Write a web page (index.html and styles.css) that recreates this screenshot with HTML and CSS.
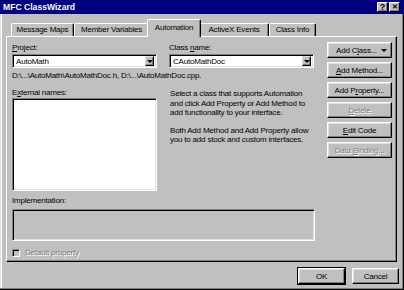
FILE: index.html
```html
<!DOCTYPE html>
<html>
<head>
<meta charset="utf-8">
<title>MFC ClassWizard</title>
<link rel="stylesheet" href="styles.css">
</head>
<body>
<div class="dialog">
  <div class="titlebar">
    <span class="title">MFC ClassWizard</span>
    <div class="caption-btns">
      <span class="cap-btn">?</span><span class="cap-btn close">&#x2715;</span>
    </div>
  </div>
  <ul class="tabs">
    <li class="tab t-maps">Message Maps</li>
    <li class="tab t-vars">Member Variables</li>
    <li class="tab t-auto selected">Automation</li>
    <li class="tab t-events">ActiveX Events</li>
    <li class="tab t-info">Class Info</li>
  </ul>
  <div class="panel">
    <div class="main">
      <div class="combos">
        <div class="field">
          <label><u>P</u>roject:</label>
          <div class="combo"><span class="value">AutoMath</span><span class="drop"><i></i></span></div>
        </div>
        <div class="field">
          <label>Class <u>n</u>ame:</label>
          <div class="combo"><span class="value">CAutoMathDoc</span><span class="drop"><i></i></span></div>
        </div>
      </div>
      <div class="path">D:\...\AutoMath\AutoMathDoc.h, D:\...\AutoMathDoc.cpp.</div>
      <div class="middle">
        <div class="names">
          <label>E<u>x</u>ternal names:</label>
          <div class="listbox"></div>
        </div>
        <div class="help">
          <p>Select a class that supports Automation<br>and click Add Property or Add Method to<br>add functionality to your interface.</p>
          <p>Both Add Method and Add Property allow<br>you to add stock and custom interfaces.</p>
        </div>
      </div>
      <label class="impl-label">Implementation:</label>
      <div class="impl"></div>
      <div class="check"><span class="box"></span><span class="disabled">Default property</span></div>
    </div>
    <div class="side">
      <div class="btn addclass"><span>Add C<u>l</u>ass...</span><i class="arrow"></i></div>
      <div class="btn"><span><u>A</u>dd Method...</span></div>
      <div class="btn"><span>Add P<u>r</u>operty...</span></div>
      <div class="btn"><span class="disabled"><u>D</u>elete</span></div>
      <div class="btn"><span><u>E</u>dit Code</span></div>
      <div class="btn"><span class="disabled">Data <u>B</u>inding...</span></div>
    </div>
  </div>
  <div class="footer">
    <div class="btn default"><span>OK</span></div>
    <div class="btn"><span>Cancel</span></div>
  </div>
</div>
</body>
</html>
```

FILE: styles.css
```css
*{margin:0;padding:0;box-sizing:border-box;}
body{background:#c0c0c0;font-family:"Liberation Sans",Arial,sans-serif;font-size:8px;letter-spacing:-0.2px;color:#000;}
u{text-decoration:underline;text-underline-offset:1px;}
.dialog{width:404px;height:290px;background:#c0c0c0;display:flex;flex-direction:column;box-shadow:inset -1px -1px #000,inset -2px -2px #808080,inset 1px 0 #dfdfdf,inset 2px 0 #fff;}

/* title bar */
.titlebar{height:14px;background:#000080;display:flex;align-items:center;justify-content:space-between;padding:0 4px 0 3px;}
.title{color:#fff;font-weight:bold;font-size:8.6px;letter-spacing:0;}
.caption-btns{display:flex;gap:1px;}
.cap-btn{width:11px;height:10px;background:#c0c0c0;border:1px solid;border-color:#fff #000 #000 #fff;box-shadow:inset -1px -1px #808080;font-weight:bold;font-size:9px;line-height:8px;text-align:center;letter-spacing:0;}
.cap-btn.close{font-size:7px;}

/* tabs */
.tabs{list-style:none;display:flex;align-items:flex-end;height:18px;margin:5px 0 -1px 11px;}
.tab{height:14px;line-height:12px;text-align:center;background:#c0c0c0;border:1px solid;border-bottom:0;border-color:#fff #000 #000 #fff;box-shadow:inset -1px 0 #808080;border-radius:2px 2px 0 0;white-space:nowrap;}
.t-maps{width:63px;}
.t-vars{width:75px;}
.t-auto{width:54px;}
.t-events{width:70px;}
.t-info{width:47px;}
.tab.selected{height:18px;line-height:16px;margin:0 -2px;position:relative;z-index:1;}

/* panel */
.panel{margin-left:6px;width:391px;height:226px;border:1px solid;border-color:#fff #000 #000 #fff;box-shadow:inset -1px -1px #808080;padding:6px 0 0 5px;display:flex;gap:12px;}
.main{width:303px;display:flex;flex-direction:column;}
label{display:block;height:10px;line-height:10px;}
.combos{display:flex;gap:12px;}
.field{width:145px;}
.field label{margin-bottom:1px;}
.combo,.listbox,.impl{border:1px solid;border-color:#808080 #fff #fff #808080;box-shadow:inset 1px 1px #000,inset -1px -1px #dfdfdf;background:#fff;}
.combo{height:14px;display:flex;align-items:center;justify-content:space-between;padding:2px 2px 2px 3px;}
.drop{width:9px;height:10px;background:#c0c0c0;border:1px solid;border-color:#dfdfdf #000 #000 #dfdfdf;box-shadow:inset -1px -1px #808080;display:flex;align-items:center;justify-content:center;}
.drop i,.arrow{width:0;height:0;border-left:3px solid transparent;border-right:3px solid transparent;border-top:3px solid #000;}
.path{height:9px;line-height:9px;margin-top:3px;white-space:nowrap;}
.middle{display:flex;gap:13px;margin-top:8px;}
.names{width:145px;}
.listbox{height:93px;}
.help{padding-top:1px;white-space:nowrap;}
.help p{line-height:9.6px;margin-bottom:8px;}
.impl-label{margin-top:5px;}
.impl{height:32px;margin-top:3px;background:#c0c0c0;}
.check{display:flex;align-items:center;gap:5px;margin-top:7px;}
.box{width:8px;height:8px;border:1px solid;border-color:#808080 #fff #fff #808080;box-shadow:inset 1px 1px #000;background:#c0c0c0;}
.disabled{color:#808080;text-shadow:1px 1px #fff;}

/* buttons */
.side{display:flex;flex-direction:column;gap:4px;margin-top:-1px;}
.btn{width:65px;height:16px;display:flex;align-items:center;justify-content:center;background:#c0c0c0;border:1px solid;border-color:#fff #000 #000 #fff;box-shadow:inset -1px -1px #808080,inset 1px 1px #dfdfdf;white-space:nowrap;}
.addclass{justify-content:space-between;padding:0 4px 0 8px;}
.footer{display:flex;justify-content:flex-end;gap:7px;margin:6px 5px 0 0;}
.footer .btn{width:47px;}
.btn.default{outline:1px solid #000;}
```
